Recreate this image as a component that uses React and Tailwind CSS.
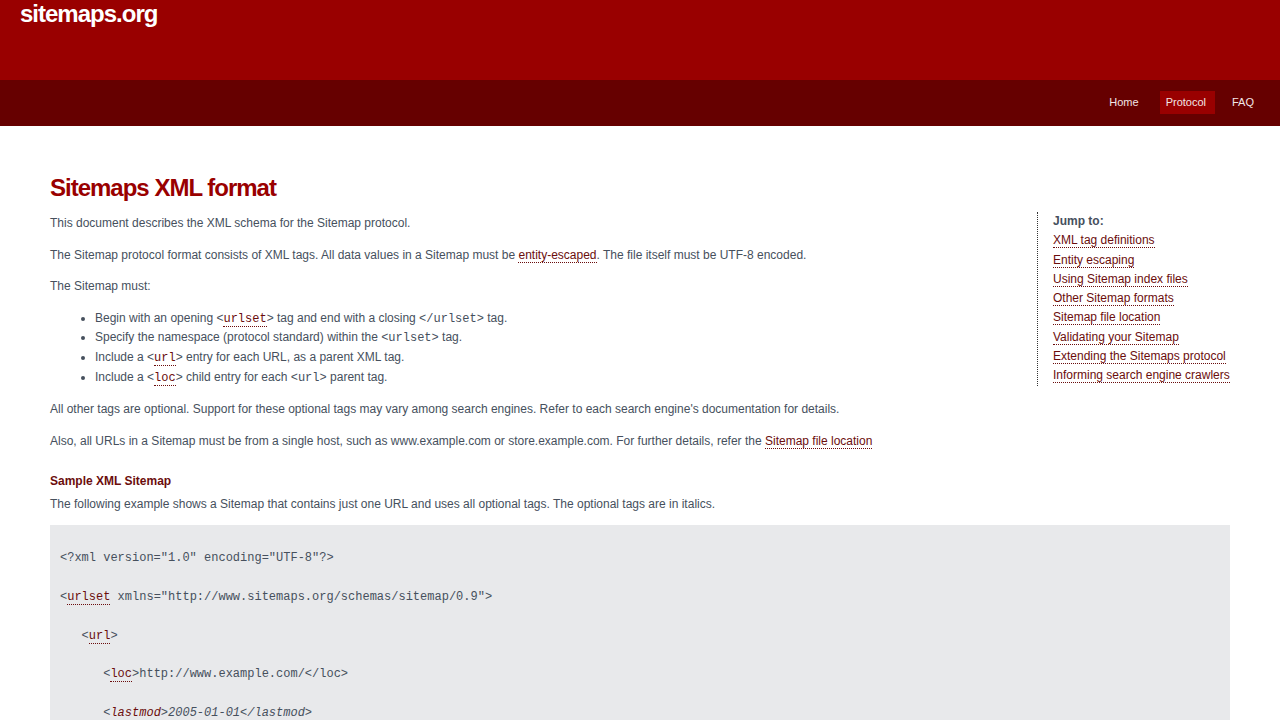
import React from "react";

const A = ({ children, mono, italic }) => (
  <a
    href="#"
    className={
      "text-[#6b0d0d] border-b border-dotted border-[#6b0d0d] no-underline" +
      (mono ? " font-['Liberation_Mono',monospace] leading-none" : "") +
      (italic ? " italic" : "")
    }
  >
    {children}
  </a>
);

const M = ({ children }) => (
  <span className="font-['Liberation_Mono',monospace] leading-none">{children}</span>
);

const sideLinks = [
  "XML tag definitions",
  "Entity escaping",
  "Using Sitemap index files",
  "Other Sitemap formats",
  "Sitemap file location",
  "Validating your Sitemap",
  "Extending the Sitemaps protocol",
  "Informing search engine crawlers",
];

export default function App() {
  return (
    <div className="min-h-screen bg-white font-['Liberation_Sans',Arial,sans-serif] text-[12px] text-[#46505d]">
      <header className="h-20 bg-[#990000] px-5">
        <div className="pt-[2px] text-[24px] leading-[24px] font-bold tracking-[-1px] text-white">
          sitemaps.org
        </div>
      </header>
      <nav className="h-[46px] bg-[#660000] flex items-center justify-end pr-[20px] pb-[1px] text-[11px] text-[#f2e6e6]">
        <a href="#" className="px-[6px] py-[4px] leading-[15px]">Home</a>
        <a href="#" className="ml-[15px] pl-[6px] pr-[9px] py-[4px] leading-[15px] bg-[#990000]">Protocol</a>
        <a href="#" className="ml-[11px] px-[6px] py-[4px] leading-[15px]">FAQ</a>
      </nav>

      <main className="px-[50px] pt-[48px]">
        <h1 className="text-[24px] leading-[28px] font-bold tracking-[-1px] text-[#990000] mb-[12px]">
          Sitemaps XML format
        </h1>

        <aside className="float-right w-[193px] border-l border-dotted border-[#333] pl-[15px] leading-[19.3px] ml-[20px] -mt-[2px]">
          <div className="font-bold">Jump to:</div>
          {sideLinks.map((l) => (
            <div key={l}>
              <A>{l}</A>
            </div>
          ))}
        </aside>

        <div className="leading-[19.2px]">
          <p className="mb-[12.4px]">This document describes the XML schema for the Sitemap protocol.</p>
          <p className="mb-[12.4px]">
            The Sitemap protocol format consists of XML tags. All data values in a Sitemap must be{" "}
            <A>entity-escaped</A>. The file itself must be UTF-8 encoded.
          </p>
          <p className="mb-[12.4px]">The Sitemap must:</p>
          <ul className="list-disc pl-[45px] mb-[12.6px] leading-[19.6px]">
            <li>
              Begin with an opening &lt;<A mono>urlset</A>&gt; tag and end with a closing{" "}
              <M>&lt;/urlset&gt;</M> tag.
            </li>
            <li>
              Specify the namespace (protocol standard) within the <M>&lt;urlset&gt;</M> tag.
            </li>
            <li>
              Include a &lt;<A mono>url</A>&gt; entry for each URL, as a parent XML tag.
            </li>
            <li>
              Include a &lt;<A mono>loc</A>&gt; child entry for each <M>&lt;url&gt;</M> parent tag.
            </li>
          </ul>
          <p className="mb-[12.8px]">
            All other tags are optional. Support for these optional tags may vary among search engines. Refer to each
            search engine's documentation for details.
          </p>
          <p className="mb-[12.8px]">
            Also, all URLs in a Sitemap must be from a single host, such as www.example.com or store.example.com. For
            further details, refer the <A>Sitemap file location</A>
          </p>
          <h3 className="clear-both pt-[8px] mb-[4px] font-bold text-[#6b0d0d]">Sample XML Sitemap</h3>
          <p className="mb-[11px]">
            The following example shows a Sitemap that contains just one URL and uses all optional tags. The optional
            tags are in italics.
          </p>
        </div>

        <div className="bg-[#e8e9eb] px-[10px] pt-[24px] pb-[4px] font-['Liberation_Mono',monospace] text-[12px] leading-[19.35px] whitespace-pre">
          <div className="mb-[19.35px]">&lt;?xml version="1.0" encoding="UTF-8"?&gt;</div>
          <div className="mb-[19.35px]">
            &lt;<A>urlset</A> xmlns="http://www.sitemaps.org/schemas/sitemap/0.9"&gt;
          </div>
          <div className="mb-[19.35px]">
            {"   "}&lt;<A>url</A>&gt;
          </div>
          <div className="mb-[19.35px]">
            {"      "}&lt;<A>loc</A>&gt;http://www.example.com/&lt;/loc&gt;
          </div>
          <div className="mb-[19.35px]">
            {"      "}&lt;<A italic>lastmod</A>
            <span className="italic">&gt;2005-01-01&lt;/lastmod&gt;</span>
          </div>
          <div className="mb-[19.35px]">
            {"      "}&lt;<A italic>changefreq</A>
            <span className="italic">&gt;monthly&lt;/changefreq&gt;</span>
          </div>
          <div className="mb-[19.35px]">
            {"      "}&lt;<A italic>priority</A>
            <span className="italic">&gt;0.8&lt;/priority&gt;</span>
          </div>
          <div className="mb-[19.35px]">{"   "}&lt;/url&gt;</div>
          <div className="mb-[19.35px]">&lt;/urlset&gt;</div>
        </div>
      </main>
    </div>
  );
}
